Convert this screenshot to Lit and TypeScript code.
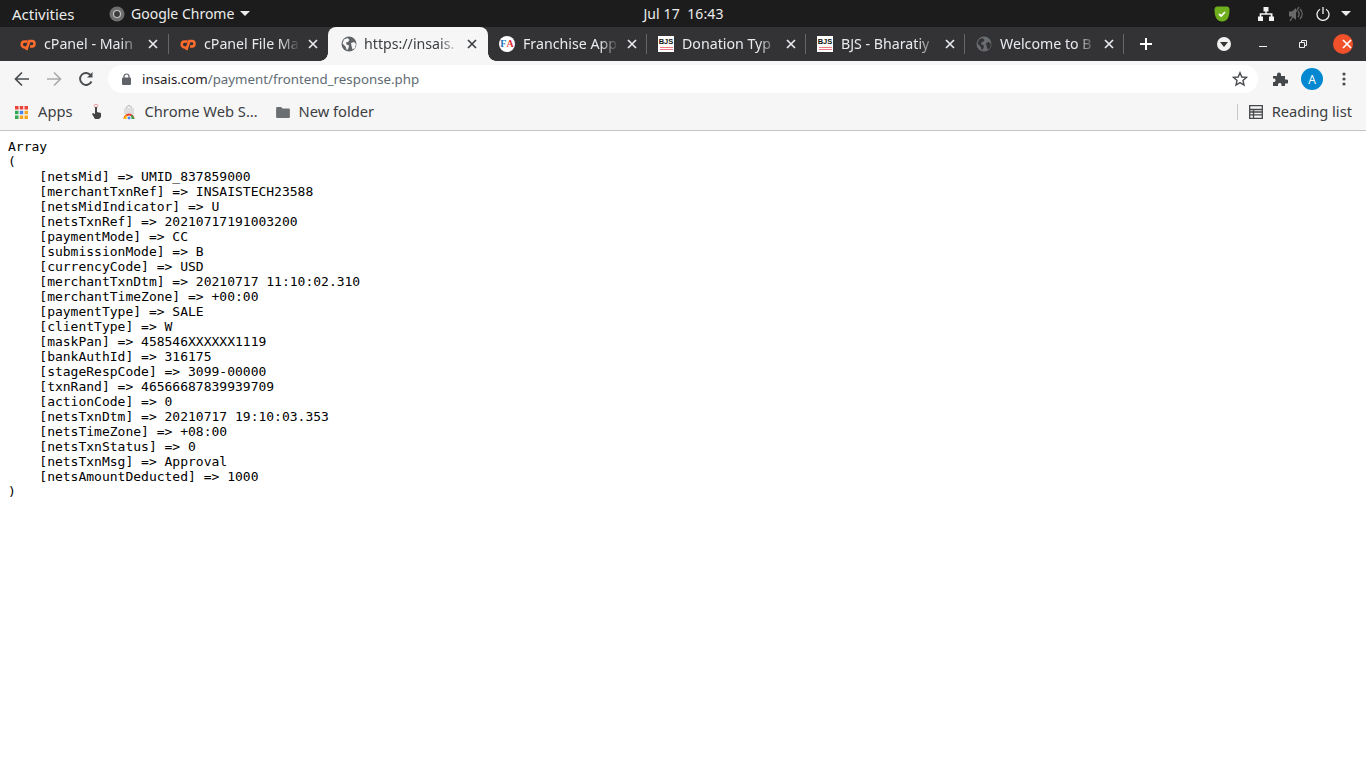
import { LitElement, html, css, svg } from "lit";
import { customElement } from "lit/decorators.js";

const globe = (c: string, land: string) => html`<svg class="fav" viewBox="0 0 16 16"><circle cx="8" cy="8" r="7.500" fill="${c}"/><path d="M3 3.500 6.500 2 8.500 4 7 6 5 6.500 5.500 8.500 8 9.500 7.500 12 6 14.500 4.500 10.500 1.500 7.500ZM10 7 13 6 15 8 14 12 11.500 13.500 10.500 10Z" fill="${land}"/></svg>`;
const cp = html`<svg class="fav" viewBox="0 0 16 16"><path d="M7.500 5.600H4.500C.8 5.600.8 11.400 4.500 11.400H5.800M6.300 14 9.300 5H12C15.400 5 15.400 10.400 12 10.400H10" stroke="#ff6c2c" stroke-width="2.500" fill="none"/></svg>`;
const bjs = html`<span class="bjs"><b>BJS</b><i></i><i></i></span>`;
const fa = html`<span class="fa"><b>F</b><u>A</u></span>`;

const tabs = [
  { icon: cp, title: "cPanel - Main", cls: "wide" },
  { icon: cp, title: "cPanel File Ma", cls: "pre" },
  { icon: globe("#5f6368", "#f6f6f6"), title: "https://insais.", cls: "active" },
  { icon: fa, title: "Franchise App", cls: "" },
  { icon: bjs, title: "Donation Typ", cls: "" },
  { icon: bjs, title: "BJS - Bharatiy", cls: "" },
  { icon: globe("#696c70", "#333335"), title: "Welcome to B", cls: "" },
];

const dump = `Array
(
    [netsMid] => UMID_837859000
    [merchantTxnRef] => INSAISTECH23588
    [netsMidIndicator] => U
    [netsTxnRef] => 20210717191003200
    [paymentMode] => CC
    [submissionMode] => B
    [currencyCode] => USD
    [merchantTxnDtm] => 20210717 11:10:02.310
    [merchantTimeZone] => +00:00
    [paymentType] => SALE
    [clientType] => W
    [maskPan] => 458546XXXXXX1119
    [bankAuthId] => 316175
    [stageRespCode] => 3099-00000
    [txnRand] => 46566687839939709
    [actionCode] => 0
    [netsTxnDtm] => 20210717 19:10:03.353
    [netsTimeZone] => +08:00
    [netsTxnStatus] => 0
    [netsTxnMsg] => Approval
    [netsAmountDeducted] => 1000
)`;

const x = html`<svg class="close" viewBox="0 0 10 10"><path d="M1 1 9 9M9 1 1 9" stroke="currentColor" stroke-width="1.700" fill="none"/></svg>`;
const appColors = ["#ea4335", "#ea4335", "#ea4335", "#34a853", "#4285f4", "#f5a623", "#34a853", "#f5a623", "#f5a623"];

@customElement("app-root")
export class AppRoot extends LitElement {
  static styles = css`
    :host { display: block; height: 768px; background: #fff; overflow: hidden; font-family: "Noto Sans", sans-serif; }
    .top { height: 27px; background: #1c1c1c; color: #ececec; display: grid; grid-template-columns: 1fr auto 1fr; align-items: center; font-size: 14px; }
    .top-l { display: flex; align-items: center; padding-left: 12px; }
    .activities { width: 97px; font-size: 15px; white-space: nowrap; }
    .chrome-ic { width: 16px; height: 16px; margin: 0 6px 0 0; }
    .caret { width: 0; height: 0; border: 5px solid transparent; border-top: 5px solid #ececec; border-bottom: 0; margin-left: 6px; }
    .clock { letter-spacing: .1px; white-space: pre; padding-left: 1px; }
    .top-r { display: flex; align-items: center; justify-content: flex-end; }
    .shield { width: 16px; height: 16px; margin-right: 28px; }
    .net { width: 16px; height: 14px; margin-right: 14px; }
    .vol { width: 16px; height: 16px; margin-right: 12px; }
    .power { width: 14px; height: 14px; margin-right: 11px; }
    .tray-caret { margin: 0 15px 0 0; }

    .strip { height: 34px; background: #333335; display: flex; align-items: stretch; padding-left: 9px; color: #e8eaed; }
    .tab { width: 159px; position: relative; display: flex; align-items: center; padding-left: 11px; box-sizing: border-box; font-size: 14.200px; }
    .tab.wide { width: 160px; }
    .tab::after { content: ""; position: absolute; right: 0; top: 7px; height: 20px; width: 1px; background: #66666a; }
    .tab.pre::after { display: none; }
    .tab.active { background: #f6f6f6; color: #3c4043; border-radius: 8px 8px 0 0; width: 160px; padding-left: 13px; }
    .tab.active::before, .tab.active::after { content: ""; position: absolute; top: auto; bottom: 0; width: 8px; height: 8px; }
    .tab.active::before { left: -8px; right: auto; background: radial-gradient(circle at 0 0, transparent 7.500px, #f6f6f6 8px); }
    .tab.active::after { right: -8px; background: radial-gradient(circle at 100% 0, transparent 7.500px, #f6f6f6 8px); }
    .tab.active .close { margin-left: 8px; }
    .tab.active .title { width: 95px; margin-left: 7px; }
    .fav { width: 16px; height: 16px; flex: none; display: block; }
    .title { width: 96px; margin: 0 0 2px 8px; white-space: nowrap; -webkit-mask-image: linear-gradient(90deg, #000 80%, transparent 100%); mask-image: linear-gradient(90deg, #000 80%, transparent 100%); }
    .close { width: 10px; height: 10px; margin-left: 8px; flex: none; }
    .bjs { width: 16px; height: 16px; background: #fff; display: flex; flex-direction: column; align-items: center; flex: none; box-sizing: border-box; padding-top: 2px; }
    .bjs b { font: 700 7.500px/8px "Liberation Sans", sans-serif; color: #111; }
    .bjs i { width: 13px; height: 1px; background: #ef7b85; margin-top: 1px; }
    .fa { width: 16px; height: 16px; border-radius: 50%; background: #fff; display: flex; align-items: center; justify-content: center; font: 700 10px/16px "Liberation Serif", serif; flex: none; }
    .fa b { color: #1d74b8; }
    .fa u { color: #e12a33; text-decoration: none; }
    .plus { width: 12px; height: 12px; margin-left: 16px; align-self: center; }
    .wc { margin-left: auto; display: flex; align-items: center; }
    .dropdown { width: 14px; height: 14px; border-radius: 50%; background: #f1f1f1; display: flex; align-items: center; justify-content: center; margin-right: 28px; }
    .dropdown::before { content: ""; border: 4px solid transparent; border-top: 5px solid #333; border-bottom: 0; }
    .min { width: 8px; height: 1px; background: #f1f1f1; margin: 4px 32px 0 0; }
    .rest { width: 8px; height: 8px; margin-right: 26px; }
    .closewin { width: 20px; height: 20px; border-radius: 50%; background: #f1512a; display: flex; align-items: center; justify-content: center; margin-right: 13px; color: #fff; }

    .bar { height: 33px; background: #f6f6f6; display: flex; align-items: center; padding: 4px 0 1px; box-sizing: border-box; }
    .nav { width: 16px; height: 16px; margin-left: 14px; flex: none; }
    .nav + .nav { margin-left: 16px; }
    .omni { width: 1150px; height: 28px; margin-left: 14px; background: #fff; border-radius: 14px; display: flex; align-items: center; padding-left: 14px; box-sizing: border-box; font-size: 13.300px; color: #5f6b73; flex: none; }
    .url { margin-bottom: 1px; }
    .lock { width: 9px; height: 12px; margin-right: 11px; }
    .host { color: #1f2124; }
    .star { width: 16px; height: 16px; margin-left: auto; margin-right: 10px; }
    .puzzle { width: 16px; height: 16px; margin-left: 14px; }
    .avatar { width: 22px; height: 22px; border-radius: 50%; background: #0288d1; color: #fff; font-size: 12px; display: flex; align-items: center; justify-content: center; margin-left: 13px; }
    .dots { width: 4px; height: 14px; margin-left: 19px; }

    .bm { height: 37px; box-sizing: border-box; background: #f6f6f6; border-bottom: 1px solid #c4c4c4; display: flex; align-items: center; font-size: 14.700px; color: #3c4043; padding-left: 15px; }
    .bm span { margin-bottom: 2px; }
    .bm .bm-sep { margin-bottom: 0; }
    .apps { width: 13px; height: 13px; margin-right: 10px; }
    .hand { width: 12px; height: 16px; margin-left: 18px; }
    .store { width: 16px; height: 16px; margin: 0 8px 0 18px; }
    .folder { width: 14px; height: 11px; margin: 0 9px 0 18px; }
    .bm-r { margin-left: auto; display: flex; align-items: center; }
    .bm-sep { width: 1px; height: 16px; background: #c9c9c9; margin-right: 11px; }
    .list { width: 14px; height: 14px; margin-right: 9px; }
    .rl { margin-right: 14px; }

    pre { margin: 0; padding: 8px; font: 13px/15px "DejaVu Sans Mono", monospace; color: #000; }
  `;

  render() {
    return html`
      <div class="top">
        <div class="top-l">
          <span class="activities">Activities</span>
          <svg class="chrome-ic" viewBox="0 0 16 16"><circle cx="8" cy="8" r="7.500" fill="#6e6e6e"/><circle cx="8" cy="8" r="3.500" fill="#3a3a3a" stroke="#c4c4c4" stroke-width="1.200"/></svg>
          <span>Google Chrome</span><span class="caret"></span>
        </div>
        <div class="clock">Jul 17  16:43</div>
        <div class="top-r">
          <svg class="shield" viewBox="0 0 16 16"><path d="M3.500.5H12.500C14.800.5 15.500 1.800 15.500 4 15.500 10 14 15.500 8 15.500 2.500 15.500.5 10 .5 4 .5 1.800 1.200.5 3.500.5Z" fill="#6fae1c"/><path d="M5 8 7.200 10 11 6" stroke="#fff" stroke-width="1.800" fill="none"/></svg>
          <svg class="net" viewBox="0 0 16 14"><path d="M5.500 0H10.500V4.500H8.700V6.300H14.500V9.500H16V14H11V9.500H12.700V7.700H3.300V9.500H5V14H0V9.500H1.700V6.300H7.300V4.500H5.500Z" fill="#f4f4f4"/></svg>
          <svg class="vol" viewBox="0 0 16 16"><path d="M1 5.500H4L8 2V14L4 10.500H1Z" fill="#6a6a6a"/><path d="M10 5C11.500 6.500 11.500 9.500 10 11M12 3C14.800 6 14.800 10 12 13" stroke="#6a6a6a" stroke-width="1.300" fill="none"/><path d="M2 15 11 1" stroke="#6a6a6a" stroke-width="1.300"/></svg>
          <svg class="power" viewBox="0 0 14 14"><path d="M4 2.200A6 6 0 1 0 10 2.200M7 0V7" stroke="#f0f0f0" stroke-width="1.300" fill="none"/></svg>
          <span class="caret tray-caret"></span>
        </div>
      </div>
      <div class="strip">
        ${tabs.map((t) => html`
          <div class="tab ${t.cls}">
            ${t.icon}<span class="title">${t.title}</span>${x}
          </div>`)}
        <svg class="plus" viewBox="0 0 12 12"><path d="M6 0V12M0 6H12" stroke="#fff" stroke-width="2"/></svg>
        <div class="wc">
          <span class="dropdown"></span>
          <span class="min"></span>
          <svg class="rest" viewBox="0 0 8 8"><path d="M2.500 2V.5H7.500V5.500H6M.5 2.500H5.500V7.500H.5Z" stroke="#f1f1f1" fill="none"/></svg>
          <span class="closewin">${x}</span>
        </div>
      </div>
      <div class="bar">
        <svg class="nav" viewBox="0 0 16 16"><path d="M15 8H2M8 1.500 1.500 8 8 14.500" stroke="#4a4d50" stroke-width="1.700" fill="none"/></svg>
        <svg class="nav" viewBox="0 0 16 16"><path d="M1 8H14M8 1.500 14.500 8 8 14.500" stroke="#a9abad" stroke-width="1.700" fill="none"/></svg>
        <svg class="nav" viewBox="0 0 16 16"><path d="M13.500 10.500A6 6 0 1 1 13 4.500" stroke="#4a4d50" stroke-width="1.900" fill="none"/><path d="M14.500 1V6.500H9Z" fill="#4a4d50"/></svg>
        <div class="omni">
          <svg class="lock" viewBox="0 0 9 12"><path d="M2 5V3.500A2.500 2.500 0 0 1 7 3.500V5" stroke="#5f6368" stroke-width="1.200" fill="none"/><rect y="4.500" width="9" height="7.500" rx="1" fill="#5f6368"/></svg>
          <span class="url"><span class="host">insais.com</span>/payment/frontend_response.php</span>
          <svg class="star" viewBox="0 0 16 16"><path d="M8 1.700 9.800 6 14.500 6.400 11 9.400 12 14 8 11.600 4 14 5 9.400 1.500 6.400 6.200 6Z" stroke="#4a4d50" stroke-width="1.400" fill="none"/></svg>
        </div>
        <svg class="puzzle" viewBox="0 0 16 16"><path d="M1 5H5V3.500A2 2 0 0 1 9 3.500V5H13V8.500H14.500A2 2 0 0 1 14.500 12.500H13V15H9.500V13.500A1.800 1.800 0 0 0 6 13.500V15H1V11H2.500A2 2 0 0 0 2.500 7.500H1Z" fill="#45484b"/></svg>
        <div class="avatar">A</div>
        <svg class="dots" viewBox="0 0 4 14"><circle cx="2" cy="2" r="1.600" fill="#4a4d50"/><circle cx="2" cy="7" r="1.600" fill="#4a4d50"/><circle cx="2" cy="12" r="1.600" fill="#4a4d50"/></svg>
      </div>
      <div class="bm">
        <svg class="apps" viewBox="0 0 13 13">
          ${appColors.map((c, i) => svg`<rect x="${(i % 3) * 4.750}" y="${Math.floor(i / 3) * 4.750}" width="3.500" height="3.500" fill="${c}"/>`)}
        </svg>
        <span>Apps</span>
        <svg class="hand" viewBox="0 0 12 16"><circle cx="5" cy="2" r="1.800" fill="none" stroke="#e88" stroke-width=".8"/><path d="M4 3H6V8L10 9V13L8 15H4L1 10 2 9 4 10Z" fill="#444"/></svg>
        <svg class="store" viewBox="0 0 16 16"><path d="M3 4H13V10H3Z" fill="#ddd"/><path d="M5.500 4C5.500 1 10.500 1 10.500 4" stroke="#aaa" fill="none"/><path d="M2.500 15A5.500 5.500 0 0 1 13.500 15Z" fill="#ea4335"/><path d="M8 15 5 10.500 2.500 15Z" fill="#fbbc05"/><path d="M8 15 11 10.500 13.500 15Z" fill="#34a853"/><circle cx="8" cy="14" r="2" fill="#4285f4" stroke="#fff"/></svg>
        <span>Chrome Web S…</span>
        <svg class="folder" viewBox="0 0 15 12"><path d="M0 1.500C0 .5.500 0 1.500 0H5.500L7 1.500H13.500C14.500 1.500 15 2 15 3V10.500C15 11.500 14.500 12 13.500 12H1.500C.5 12 0 11.500 0 10.500Z" fill="#6c6f72"/></svg>
        <span>New folder</span>
        <div class="bm-r">
          <span class="bm-sep"></span>
          <svg class="list" viewBox="0 0 14 14"><path d="M.7.7H13.300V13.300H.7ZM.7 4.500H13.300M.7 7H13.300M.7 9.800H13.300M4.500 4.500V13" stroke="#45484b" stroke-width="1.300" fill="none"/></svg>
          <span class="rl">Reading list</span>
        </div>
      </div>
      <pre>${dump}</pre>
    `;
  }
}
